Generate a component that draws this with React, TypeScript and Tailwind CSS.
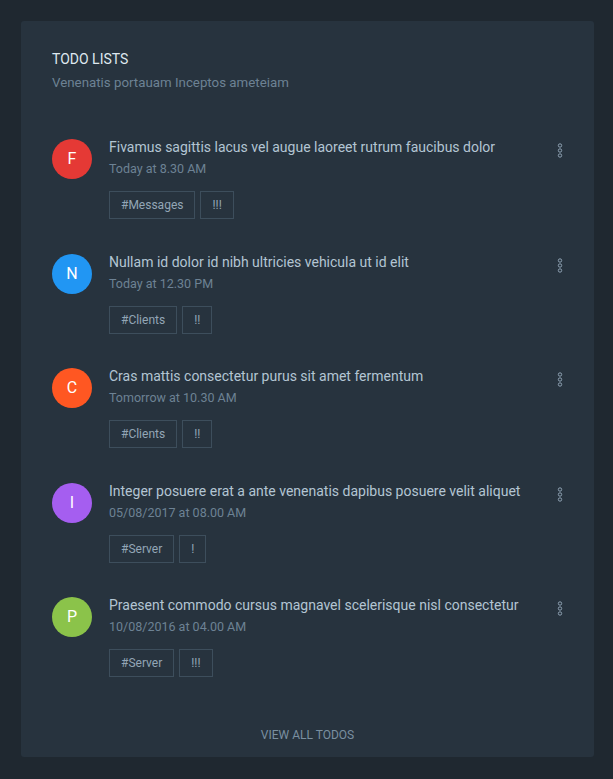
const todos = [
  { letter: "F", color: "bg-[#e53935]", title: "Fivamus sagittis lacus vel augue laoreet rutrum faucibus dolor", date: "Today at 8.30 AM", tag: "#Messages", level: "!!!" },
  { letter: "N", color: "bg-[#2196f3]", title: "Nullam id dolor id nibh ultricies vehicula ut id elit", date: "Today at 12.30 PM", tag: "#Clients", level: "!!" },
  { letter: "C", color: "bg-[#ff5722]", title: "Cras mattis consectetur purus sit amet fermentum", date: "Tomorrow at 10.30 AM", tag: "#Clients", level: "!!" },
  { letter: "I", color: "bg-[#a55ef0]", title: "Integer posuere erat a ante venenatis dapibus posuere velit aliquet", date: "05/08/2017 at 08.00 AM", tag: "#Server", level: "!" },
  { letter: "P", color: "bg-[#8bc34a]", title: "Praesent commodo cursus magnavel scelerisque nisl consectetur", date: "10/08/2016 at 04.00 AM", tag: "#Server", level: "!!!" },
];

function Dots() {
  return (
    <svg width="6" height="15" viewBox="0 0 6 15" className="text-[#8ea2b3]">
      <circle cx="3" cy="2.5" r="1.7" fill="none" stroke="currentColor" strokeWidth="1" />
      <circle cx="3" cy="7.5" r="1.7" fill="none" stroke="currentColor" strokeWidth="1" />
      <circle cx="3" cy="12.5" r="1.7" fill="none" stroke="currentColor" strokeWidth="1" />
    </svg>
  );
}

export default function App() {
  return (
    <div className="min-h-[779px] bg-[#1f2830] p-[21px] pr-[19px] font-['Roboto',sans-serif]">
      <div className="bg-[#27333e] rounded-[3px] px-[31px] pt-[30px] pb-[15px]">
        <h2 className="text-[14px] leading-[16px] text-[#dfe8ef]">TODO LISTS</h2>
        <p className="mt-[8px] text-[13.3px] leading-[16px] text-[#6d8294]">Venenatis portauam Inceptos ameteiam</p>

        <div className="mt-[47px] flex flex-col gap-[33.5px]">
          {todos.map((t) => (
            <div key={t.title} className="flex items-start">
              <div className={`${t.color} w-[40px] h-[40px] rounded-full flex items-center justify-center text-white text-[16px] shrink-0 mt-[1px]`}>
                {t.letter}
              </div>
              <div className="ml-[17px] flex-1">
                <div className="text-[14px] leading-[18px] text-[#b3c5d3]">{t.title}</div>
                <div className="mt-[5px] text-[12.5px] leading-[16px] text-[#6d8294]">{t.date}</div>
                <div className="mt-[14px] flex gap-[5px]">
                  <span className="h-[28px] px-[11px] border border-[#3d4e5c] text-[12px] text-[#93a6b6] flex items-center">{t.tag}</span>
                  <span className="h-[28px] px-[11px] border border-[#3d4e5c] text-[12px] text-[#93a6b6] flex items-center">{t.level}</span>
                </div>
              </div>
              <div className="ml-4 mt-[5px]">
                <Dots />
              </div>
            </div>
          ))}
        </div>

        <div className="mt-[51px] text-center text-[12px] leading-[14px] text-[#7a8fa0]">VIEW ALL TODOS</div>
      </div>
    </div>
  );
}
